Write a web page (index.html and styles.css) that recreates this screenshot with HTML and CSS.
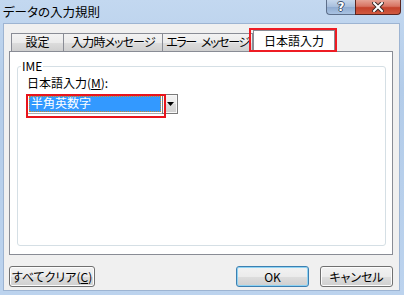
FILE: index.html
```html
<!DOCTYPE html>
<html lang="ja">
<head>
  <meta charset="UTF-8" />
  <title>データの入力規則</title>
  <link rel="stylesheet" href="styles.css">
</head>
<body>

<div class="window">
  <div class="titlebar">
    <span class="title">データの入力規則</span>
    <div class="caption-btns">
      <span class="cap help">?</span>
      <span class="cap close">
        <svg width="12" height="10" viewBox="0 0 12 10">
          <path d="M2 1 L10 9 M10 1 L2 9" stroke="#3a2a28" stroke-width="4" stroke-linecap="square"/>
          <path d="M2 1 L10 9 M10 1 L2 9" stroke="#ffffff" stroke-width="2" stroke-linecap="square"/>
        </svg>
      </span>
    </div>
  </div>

  <div class="client">
    <div class="tabs">
      <div class="tab tab-1">設定</div>
      <div class="tab tab-2">入力時メッセージ</div>
      <div class="tab tab-3">エラー メッセージ</div>
      <div class="tab active">日本語入力</div>
    </div>

    <div class="panel">
      <fieldset class="group">
        <legend>IME</legend>
        <div class="field-label">日本語入力(<u>M</u>):</div>
        <div class="combo">
          <div class="combo-value"><span class="sel">半角英数字</span></div>
          <div class="combo-arrow">
            <svg width="7" height="4" viewBox="0 0 7 4"><path d="M0 0 H7 L3.5 4 Z" fill="#000"/></svg>
          </div>
        </div>
      </fieldset>
    </div>

    <div class="buttons">
      <button class="btn btn-clear">すべてクリア(<u>C</u>)</button>
      <span class="spacer"></span>
      <button class="btn btn-ok">OK</button>
      <button class="btn btn-cancel">キャンセル</button>
    </div>
  </div>
</div>

</body>
</html>
```

FILE: styles.css
```css
* {
  box-sizing: border-box;
}
body {
  margin: 0;
  font-family: "Noto Sans CJK JP", "Noto Sans", sans-serif;
  font-size: 12px;
  font-feature-settings: "palt";
  color: #000;
}
.window {
  width: 404px;
  height: 295px;
  padding: 0 4px 4px 3px;
  background: linear-gradient(to bottom, #c3d8f0 0%, #b3cce9 30%, #bcd3ee 100%);
  display: flex;
  flex-direction: column;
}
.titlebar {
  height: 23px;
  display: flex;
  align-items: flex-start;
}
.title {
  padding-top: 4px;
  font-size: 12.5px;
  line-height: 16px;
  color: #000;
}
.caption-btns {
  margin-left: auto;
  margin-right: -1px;
  display: flex;
}
.cap {
  height: 15px;
  display: flex;
  align-items: center;
  justify-content: center;
  border: 1px solid #5d6f8a;
  border-top: none;
}
.help {
  width: 29px;
  border-radius: 0 0 0 4px;
  border-right: none;
  background: linear-gradient(to bottom, #c6d7ec 0%, #a6bedc 50%, #8fabd0 51%, #a9c3e2 100%);
  color: #fff;
  font-family: "DejaVu Sans", sans-serif;
  font-weight: bold;
  font-size: 12px;
  text-shadow: 1px 0 0 #3d4f6b, -1px 0 0 #3d4f6b, 0 1px 0 #3d4f6b, 0 -1px 0 #3d4f6b;
}
.close {
  width: 46px;
  border-radius: 0 0 4px 0;
  border-color: #5a2520;
  background: linear-gradient(to bottom, #e6a295 0%, #d77362 45%, #c4412b 55%, #d05a40 100%);
}
.client {
  flex: 1;
  background: #f0f0f0;
  border: 1px solid #9db4d2;
  padding: 5px 6px 0 5px;
  display: flex;
  flex-direction: column;
}
.tabs {
  height: 22px;
  padding-left: 2px;
  display: flex;
  align-items: flex-end;
}
.tab {
  height: 18px;
  line-height: 16px;
  text-align: center;
  border: 1px solid #898c95;
  border-bottom: none;
  border-right: none;
  background: linear-gradient(to bottom, #f3f3f3 0%, #ebebeb 50%, #dddddd 51%, #cfcfcf 100%);
  white-space: nowrap;
}
.tab-1 {
  width: 52px;
}
.tab-2 {
  width: 99px;
  letter-spacing: -0.9px;
}
.tab-3 {
  width: 91px;
  letter-spacing: -1.4px;
  word-spacing: 4px;
  border-right: 1px solid #898c95;
}
.active {
  position: relative;
  width: 82px;
  height: 22px;
  line-height: 20px;
  margin-bottom: -1px;
  border-right: 1px solid #898c95;
  background: #fff;
  z-index: 1;
}
.active::after {
  content: "";
  position: absolute;
  left: -5px;
  right: -3px;
  top: -3px;
  bottom: 0;
  border: 2px solid #ee1c24;
}
.panel {
  height: 204px;
  background: #fff;
  border: 1px solid #898c95;
  padding: 7px 6px 8px 7px;
  display: flex;
}
.group {
  flex: 1;
  margin: 0;
  padding: 3px 8px 0 9px;
  border: 1px solid #d5dfe5;
  border-radius: 3px;
}
.group legend {
  margin-left: -6px;
  padding: 0 1px;
  line-height: 14px;
}
.field-label {
  line-height: 14px;
  margin-bottom: 4px;
}
.combo {
  width: 151px;
  height: 20px;
  display: flex;
}
.combo-value {
  position: relative;
  width: 135px;
  flex-shrink: 0;
  padding: 1px;
  display: flex;
  border: 1px solid #abadb3;
  border-right: none;
}
.combo-value::after {
  content: "";
  position: absolute;
  left: -2px;
  top: -1px;
  width: 136px;
  height: 20px;
  border: 2px solid #e8141c;
}
.sel {
  flex: 1;
  background: #3399ff;
  color: #fff;
  line-height: 14px;
  padding-left: 2px;
  outline: 1px dotted #c88a2a;
  outline-offset: -1px;
}
.combo-arrow {
  width: 16px;
  flex-shrink: 0;
  display: flex;
  align-items: center;
  justify-content: center;
  border: 1px solid #7a7a7a;
  box-shadow: inset 0 0 0 1px #f8f8f8;
  background: linear-gradient(to bottom, #f2f2f2 0%, #ebebeb 50%, #dddddd 51%, #cfcfcf 100%);
}
.buttons {
  display: flex;
  margin-top: 11px;
  gap: 11px;
}
.spacer {
  flex: 1;
}
.btn {
  height: 21px;
  padding: 0;
  font-family: inherit;
  font-size: 12px;
  font-feature-settings: "palt";
  color: #000;
  border: 1px solid #707070;
  border-radius: 3px;
  background: linear-gradient(to bottom, #f2f2f2 0%, #ebebeb 50%, #dddddd 51%, #cfcfcf 100%);
  box-shadow: inset 0 0 0 1px #fcfcfc;
}
.btn-clear {
  width: 86px;
}
.btn-ok {
  width: 73px;
  border-color: #3c7fb1;
  box-shadow: inset 0 0 0 1px #8fd3f3;
}
.btn-cancel {
  width: 73px;
}
```
